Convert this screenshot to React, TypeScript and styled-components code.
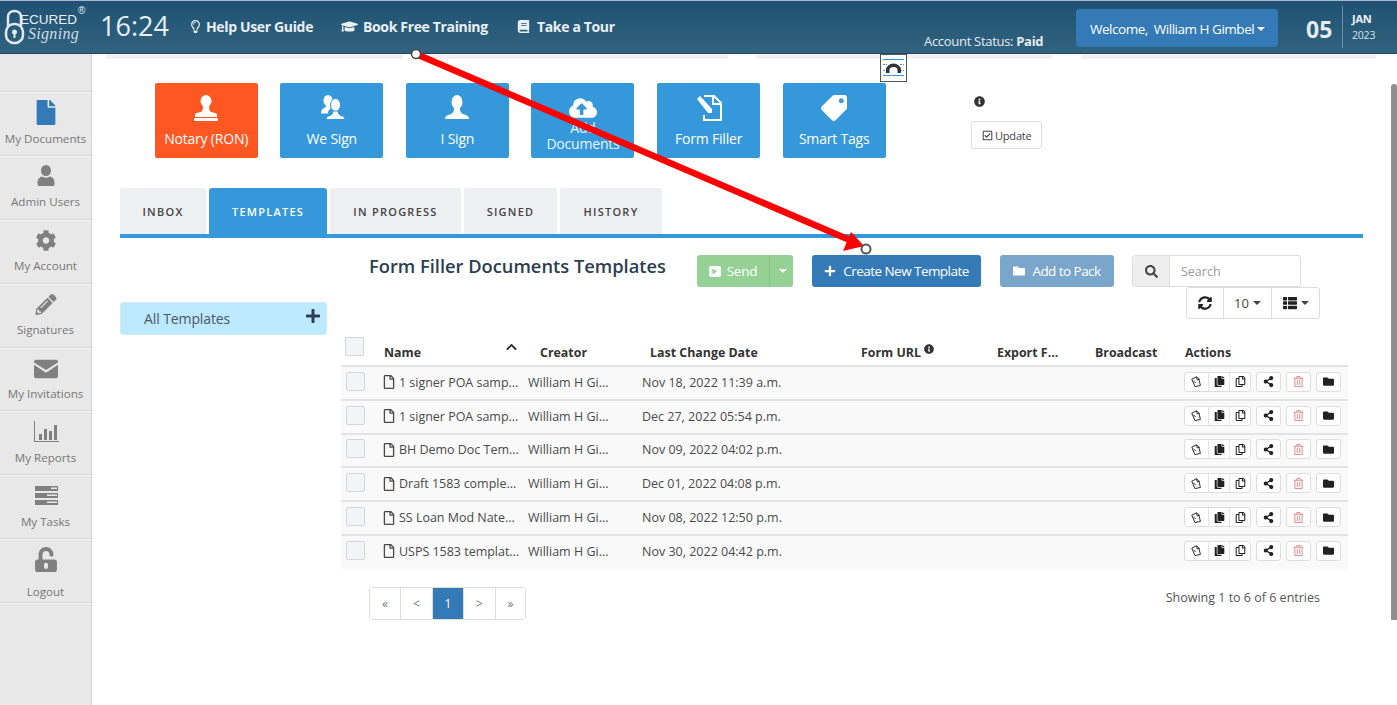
import React from "react";
import styled, { createGlobalStyle } from "styled-components";
import {
  FaBook,
  FaChevronUp,
  FaCog,
  FaCopy,
  FaFile,
  FaFolder,
  FaGraduationCap,
  FaInfoCircle,
  FaPencilAlt,
  FaPlay,
  FaPlus,
  FaRegCheckSquare,
  FaRegCopy,
  FaRegFile,
  FaRegLightbulb,
  FaRegTrashAlt,
  FaSearch,
  FaShareAlt,
  FaSyncAlt,
  FaTag,
  FaThList,
  FaUnlockAlt,
  FaCloudUploadAlt,
} from "react-icons/fa";

const GlobalStyle = createGlobalStyle`
  html, body {
    margin: 0;
    padding: 0;
    overflow: hidden;
    background: #fff;
  }
  * { box-sizing: border-box; }
`;

const Page = styled.div`
  position: relative;
  width: 1397px;
  height: 705px;
  overflow: hidden;
  font-family: "Open Sans", "Liberation Sans", sans-serif;
  color: #333;
  display: flex;
  flex-direction: column;
`;

const Header = styled.header`
  height: 54px;
  flex: none;
  display: flex;
  align-items: stretch;
  padding-right: 4px;
  border-top: 1px solid #a9b9c4;
  border-bottom: 1px solid #24495f;
  background: linear-gradient(180deg, #1f5273 0%, #31627f 100%);
  color: #fff;
`;

const LogoBox = styled.div`
  position: relative;
  width: 88px;
  flex: none;

  svg {
    position: absolute;
    left: 3px;
    top: 8px;
  }
`;

const LogoWord = styled.span`
  position: absolute;
  left: 20px;
  top: 14px;
  font: 400 13.5px/10px "Liberation Sans", sans-serif;
  color: #e6eef3;
`;

const LogoScript = styled.span`
  position: absolute;
  left: 28px;
  top: 25px;
  font: italic 400 16px/16px "Liberation Serif", serif;
  letter-spacing: 0.3px;
  color: #cfdce4;
`;

const LogoMark = styled.span`
  position: absolute;
  left: 78px;
  top: 6px;
  font: 400 10px/8px "Liberation Sans", sans-serif;
  color: #e6eef3;
`;

const Clock = styled.div`
  width: 101px;
  padding: 7px 0 0 12px;
  font-size: 27px;
  line-height: 36px;
  color: #e8eef2;
  flex: none;
`;

const NavLink = styled.a<{ $width: number }>`
  width: ${(p) => p.$width}px;
  flex: none;
  padding-top: 16px;
  display: flex;
  gap: 4px;
  font-size: 14px;
  line-height: 19px;
  font-weight: 700;
  letter-spacing: -0.35px;
  color: #e9eff3;

  svg {
    margin-top: 3px;
    font-size: 13px;
  }
`;

const HatIcon = styled(FaGraduationCap)`
  && {
    font-size: 17px;
    margin: 1px 1px 0 0;
  }
`;

const BookIcon = styled(FaBook)`
  margin-right: 3px;
`;

const Status = styled.div`
  margin-left: auto;
  padding-top: 31px;
  width: 152px;
  font-size: 13px;
  line-height: 18px;
  letter-spacing: -0.3px;
  color: #e4ebef;

  b {
    font-weight: 700;
  }
`;

const WelcomeButton = styled.div`
  margin: 8px 0 0 0;
  width: 202px;
  height: 38px;
  padding: 1px 0 0 14px;
  border-radius: 4px;
  background: #337ab7;
  display: flex;
  align-items: center;
  font-size: 13.5px;
  letter-spacing: -0.48px;
  white-space: pre;
`;

const Caret = styled.span`
  display: inline-block;
  width: 0;
  height: 0;
  margin-left: 3px;
  border-top: 4px solid currentColor;
  border-left: 4px solid transparent;
  border-right: 4px solid transparent;
`;

const DateBox = styled.div`
  width: 115px;
  flex: none;
  padding: 10px 0 0 28px;
  display: flex;
`;

const DateDay = styled.div`
  width: 36px;
  font-size: 23px;
  line-height: 36px;
  font-weight: 700;
  color: #e4ebef;
`;

const DateRest = styled.div`
  height: 42px;
  margin-top: -5px;
  padding: 5px 0 0 9px;
  border-left: 1px solid #6f8ea3;
  font-size: 10.5px;
  line-height: 16px;
  letter-spacing: -0.2px;
  color: #d8e2e8;

  b {
    display: block;
    font-size: 11px;
    font-weight: 700;
    color: #eef3f6;
  }
`;

const Body = styled.div`
  flex: 1;
  display: flex;
  min-height: 0;
`;

const Sidebar = styled.nav`
  width: 92px;
  flex: none;
  padding-top: 37px;
  background: #e8e8e8;
  border-right: 1px solid #d6d6d6;
`;

const SideItem = styled.a<{ $active?: boolean; $tall?: boolean; $pad?: number }>`
  height: 63.9px;
  display: flex;
  flex-direction: column;
  align-items: center;
  justify-content: flex-start;
  padding-top: 8px;
  gap: ${(p) => (p.$tall ? "12px" : "5.500px")};
  border-top: 1px solid #d7d7d7;
  box-shadow: inset 0 1px 0 #f4f4f4;
  font-size: 11.6px;
  line-height: 16px;
  color: #777;

  svg {
    height: 25px;
    width: 26px;
    padding: ${(p) => p.$pad ?? 0}px;
    color: ${(p) => (p.$active ? "#337ab7" : "#808080")};
  }
`;

const SideEnd = styled.div`
  border-top: 1px solid #d7d7d7;
  box-shadow: inset 0 1px 0 #f4f4f4;
  height: 2px;
`;

const Main = styled.main`
  flex: 1;
  min-width: 0;
  padding: 0 34px 0 28px;
`;

const TopStrips = styled.div`
  margin-left: -14px;
  margin-right: -13px;
  height: 5px;
  display: grid;
  grid-template-columns: 315px 335px 325px 295px;
`;

const Strip = styled.div<{ $end?: number }>`
  background: #f1f1f4;
  margin-right: ${(p) => p.$end ?? 0}px;
`;

const TileRow = styled.div`
  display: flex;
  gap: 22.6px;
  margin: 24px 0 0 34.7px;
  height: 76px;
`;

const Tile = styled.a<{ $orange?: boolean }>`
  width: 103px;
  height: 75px;
  border-radius: 2px;
  background: ${(p) => (p.$orange ? "#ff5722" : "#3498db")};
  color: #fff;
  font-size: 14px;
  line-height: 16px;
  letter-spacing: -0.2px;
  text-align: center;
  display: flex;
  flex-direction: column;
  align-items: center;
  padding-top: 11px;

  svg {
    width: 28px;
    height: 28px;
    flex: none;
    margin-bottom: 9px;
  }
`;

const TileWrap = styled.span`
  display: block;
  margin-top: -11px;
  font-size: 14px;
  line-height: 16px;
  color: #eaf4fb;
`;

const FlippedTag = styled(FaTag)`
  transform: scaleX(-1);
  padding: 1px;
`;

const UpdateBox = styled.div`
  margin-left: 63px;
  padding-top: 13px;
  font-size: 11px;
  color: #333;

  > svg {
    display: block;
    margin: 0 0 14px 3px;
    width: 11px;
    height: 11px;
  }
`;

const UpdateButton = styled.button`
  width: 71px;
  height: 28px;
  padding: 0;
  border: 1px solid #ddd;
  border-radius: 3px;
  background: #fff;
  color: #444;
  font: 400 11px "Open Sans", sans-serif;
  letter-spacing: -0.2px;
  display: flex;
  align-items: center;
  justify-content: center;
  gap: 2px;
`;

const Tabs = styled.div`
  display: flex;
  gap: 3px;
  margin-top: 29px;
  height: 46px;
`;

const Tab = styled.div<{ $active?: boolean; $width: number }>`
  width: ${(p) => p.$width}px;
  border-radius: 3px 3px 0 0;
  background: ${(p) => (p.$active ? "#3498db" : "#eeeff1")};
  color: ${(p) => (p.$active ? "#fff" : "#444")};
  font-size: 11px;
  font-weight: 600;
  letter-spacing: 1.25px;
  display: flex;
  align-items: center;
  justify-content: center;
`;

const TabLine = styled.div`
  height: 4px;
  background: #3498db;
`;

const Content = styled.div`
  display: flex;
  align-items: flex-start;
`;

const LeftPane = styled.div`
  width: 221px;
  flex: none;
  padding-top: 64px;
`;

const AllTemplates = styled.div`
  width: 207px;
  height: 33px;
  border-radius: 3px;
  background: #bde9ff;
  border: 1px solid #cfeaf8;
  padding: 0 5px 0 23px;
  display: flex;
  align-items: center;
  justify-content: space-between;
  font-size: 14px;
  color: #4a5663;
  letter-spacing: -0.1px;

  svg {
    width: 16px;
    height: 16px;
    margin-top: -6px;
    color: #2c3e50;
  }
`;

const RightPane = styled.div`
  flex: 1;
  min-width: 0;
  padding-top: 17px;
`;

const Toolbar = styled.div`
  display: flex;
  align-items: flex-start;
  padding-left: 28px;
  height: 32px;
`;

const Title = styled.h2`
  margin: 0;
  width: 328px;
  font-size: 18.3px;
  line-height: 22px;
  font-weight: 600;
  color: #2c3e50;
`;

const Button = styled.button<{ $bg: string; $width: number; $gap?: number }>`
  width: ${(p) => p.$width}px;
  height: 32px;
  margin-right: ${(p) => p.$gap ?? 0}px;
  border: 0;
  border-radius: 3px;
  padding: 0;
  background: ${(p) => p.$bg};
  color: #fff;
  font: 400 13.5px "Open Sans", sans-serif;
  letter-spacing: -0.55px;
  display: flex;
  align-items: center;
  justify-content: center;
  gap: 7px;

  svg {
    width: 12px;
    height: 12px;
  }
`;

const SplitButton = styled.div`
  width: 96px;
  height: 32px;
  margin-right: 19px;
  display: flex;
  border-radius: 3px;
  overflow: hidden;
  background: #95d195;
  color: #fff;
  font-size: 13.5px;
`;

const SplitMain = styled.div`
  width: 73px;
  border-right: 1px solid #84c284;
  display: flex;
  align-items: center;
  justify-content: center;
  gap: 6px;
  letter-spacing: -0.2px;
`;

const SplitCaret = styled.div`
  flex: 1;
  display: flex;
  align-items: center;
  justify-content: center;
`;

const PlayBox = styled.span`
  width: 12px;
  height: 11px;
  border-radius: 2px;
  background: #fff;
  color: #95d195;
  display: flex;
  align-items: center;
  justify-content: center;

  svg {
    width: 5px;
    height: 5px;
  }
`;

const Search = styled.div`
  width: 169px;
  height: 32px;
  display: flex;
  border: 1px solid #ddd;
  border-radius: 3px;
  overflow: hidden;
  font-size: 12.5px;
  color: #999;
`;

const SearchAddon = styled.div`
  width: 37px;
  background: #eee;
  border-right: 1px solid #ddd;
  color: #444;
  display: flex;
  align-items: center;
  justify-content: center;

  svg {
    width: 13px;
    height: 13px;
  }
`;

const SearchField = styled.div`
  flex: 1;
  display: flex;
  align-items: center;
  padding-left: 11px;
`;

const TableTools = styled.div`
  display: flex;
  justify-content: flex-end;
  margin-right: 43px;
  height: 32px;
`;

const ToolGroup = styled.div`
  display: flex;
  height: 32px;
  border: 1px solid #ddd;
  border-radius: 3px;
  font-size: 13px;
  color: #444;
`;

const ToolCell = styled.div<{ $width: number }>`
  width: ${(p) => p.$width}px;
  display: flex;
  align-items: center;
  justify-content: center;
  gap: 1px;
  border-left: 1px solid #ddd;

  &:first-child {
    border-left: 0;
  }

  svg {
    width: 14px;
    height: 14px;
    color: #222;
  }
`;

const Table = styled.div`
  margin: 18px 15px 0 0;
`;

const columns = "37px 150px 112px 210px 136px 100px 98px 1fr";

const HeadRow = styled.div`
  height: 30px;
  display: grid;
  grid-template-columns: ${columns};
  align-items: end;
  padding-bottom: 5px;
  border-bottom: 2px solid #e3e3e3;
  font-size: 12.4px;
  line-height: 17px;
  font-weight: 700;
  color: #333;
`;

const HeadCell = styled.div<{ $indent?: number }>`
  padding-left: ${(p) => p.$indent ?? 0}px;
  display: flex;
  align-items: flex-start;
  white-space: nowrap;
  position: relative;

  svg {
    width: 10px;
    height: 10px;
    margin: 0 0 0 3px;
  }
`;

const SortIcon = styled.span`
  position: absolute;
  left: 127px;
  top: -3px;
  font-size: 13px;
  line-height: 13px;

  svg {
    width: 13px;
    height: 12px;
    margin: 0;
  }
`;

const Row = styled.div`
  height: 33.8px;
  display: grid;
  grid-template-columns: ${columns};
  align-items: center;
  background: #f9f9f9;
  border-bottom: 2px solid #e3e3e3;
  font-size: 12.5px;
  color: #4a4a4a;
  white-space: nowrap;

  &:last-child {
    border-bottom: 0;
    padding-bottom: 2px;
  }
`;

const Check = styled.span<{ $head?: boolean }>`
  display: block;
  width: 19px;
  height: 19px;
  margin: ${(p) => (p.$head ? "0 0 5px 4px" : "-3px 0 0 5px")};
  border: 1px solid #d4d6da;
  border-radius: 2px;
  background: #f2f4f7;
`;

const NameCell = styled.div`
  display: flex;
  align-items: center;
  padding-left: 5px;
  gap: 4px;
  margin-top: -1px;
  letter-spacing: -0.02px;

  svg {
    width: 12px;
    height: 14px;
    flex: none;
  }
`;

const CreatorCell = styled.div`
  margin-top: -1px;
`;

const DateCell = styled.div`
  padding-left: 2px;
  margin-top: -1px;
`;

const Actions = styled.div`
  display: flex;
  gap: 5px;
  margin-top: -2px;
`;

const ActionGroup = styled.div`
  display: flex;
  height: 20px;
  border: 1px solid #ddd;
  border-radius: 3px;
  background: #fff;
`;

const ActionCell = styled.span<{ $width: number; $danger?: boolean }>`
  width: ${(p) => p.$width}px;
  display: flex;
  align-items: center;
  justify-content: center;
  border-left: 1px solid #e4e4e4;
  color: ${(p) => (p.$danger ? "#e58f8f" : "#222")};

  &:first-child {
    border-left: 0;
  }

  svg {
    width: 11px;
    height: 11px;
  }
`;

const Footer = styled.div`
  margin: 17px 43px 0 28px;
  display: flex;
  justify-content: space-between;
  align-items: flex-start;
`;

const Pager = styled.div`
  display: flex;
  height: 33px;
  border: 1px solid #ddd;
  border-radius: 3px;
  font-size: 12px;
  color: #777;
`;

const PageCell = styled.div<{ $active?: boolean; $width: number }>`
  width: ${(p) => p.$width}px;
  display: flex;
  align-items: center;
  justify-content: center;
  border-left: 1px solid #ddd;
  background: ${(p) => (p.$active ? "#337ab7" : "#fff")};
  color: ${(p) => (p.$active ? "#fff" : "#777")};

  &:first-child {
    border-left: 0;
  }
`;

const Showing = styled.div`
  padding-top: 2px;
  font-size: 12.5px;
  line-height: 18px;
  color: #555;
`;

const Scrollbar = styled.div`
  position: absolute;
  right: 0;
  top: 84px;
  width: 6px;
  height: 536px;
  border-radius: 3px 3px 0 0;
  background: #8e8e8e;
`;

const Overlay = styled.svg`
  position: absolute;
  left: 0;
  top: 0;
  pointer-events: none;
`;

const FloatIcon = styled.div`
  position: absolute;
  left: 880px;
  top: 54px;
  width: 27px;
  height: 28px;
  border: 1px solid #555;
  background: #fff;
`;

const ROWS = [
  ["1 signer POA samp...", "Nov 18, 2022 11:39 a.m."],
  ["1 signer POA samp...", "Dec 27, 2022 05:54 p.m."],
  ["BH Demo Doc Tem...", "Nov 09, 2022 04:02 p.m."],
  ["Draft 1583 comple...", "Dec 01, 2022 04:08 p.m."],
  ["SS Loan Mod Nate...", "Nov 08, 2022 12:50 p.m."],
  ["USPS 1583 templat...", "Nov 30, 2022 04:42 p.m."],
];

const NotaryIcon = () => (
  <svg viewBox="0 0 28 28" fill="currentColor">
    <ellipse cx="14" cy="7" rx="5.500" ry="6" />
    <path d="M11 12h6c0 3 .5 5 2 6 3 .5 6 1 6 3v2H3v-2c0-2 3-2.500 6-3 1.500-1 2-3 2-6z" />
    <rect x="2" y="24" width="24" height="3" rx="1" />
  </svg>
);

const BustIcon = () => (
  <svg viewBox="0 0 28 28" fill="currentColor">
    <ellipse cx="14" cy="8" rx="5.500" ry="7" />
    <path d="M11 14h6c0 3 .5 5 3 6 3 1 6 2 6 5H2c0-3 3-4 6-5 2.500-1 3-3 3-6z" />
  </svg>
);

const CoupleIcon = () => (
  <svg viewBox="0 0 28 28" fill="currentColor">
    <ellipse cx="10" cy="6.500" rx="4.500" ry="5.500" />
    <path d="M8 11h4c0 2 .5 3 1 3.500-2 1-3 2.500-3 5H3c0-3 1-4.500 3-5.500 1.500-.5 2-1.500 2-3z" />
    <ellipse cx="17.500" cy="11" rx="5" ry="6.500" stroke="#3498db" strokeWidth="1" />
    <path d="M15 17h5c0 2 .5 3.500 3 4.500 2 .8 4 1.500 4 4H8c0-2.500 2-3.200 4-4 2.500-1 3-2.500 3-4.500z" stroke="#3498db" strokeWidth="1" />
  </svg>
);

const FormIcon = () => (
  <svg viewBox="0 0 28 28" fill="none" stroke="currentColor" strokeWidth="2">
    <path d="M9 2h10l7 7v17H9v-5" />
    <path d="M18 2v8h8" />
    <path d="M2 5l3-3 12 13v4h-4z" fill="currentColor" stroke="none" />
  </svg>
);

const UserIcon = () => (
  <svg viewBox="0 0 26 25" fill="currentColor">
    <ellipse cx="13" cy="6.500" rx="5" ry="5.500" />
    <path d="M8.500 12.500c2.500 1.500 6.500 1.500 9 0 2.500 1 4 3 4 6v1.500c0 1.500-1 2-2 2h-13c-1 0-2-.5-2-2v-1.500c0-3 1.500-5 4-6z" />
  </svg>
);

const TasksIcon = () => (
  <svg viewBox="0 0 26 25" fill="currentColor">
    <path d="M2 3h23v5H2zM2 10h23v5H2zM2 17h23v5H2z" />
    <path d="M18 4.500h6V6h-6zM14 11.500h10V13H14zM14 18.500h10V20H14z" fill="#e8e8e8" />
  </svg>
);

const ReportsIcon = () => (
  <svg viewBox="0 0 26 25" fill="currentColor">
    <path d="M1 2h1v20h24v1H1z" />
    <path d="M6 15h3v6H6zM11 10h3v11h-3zM16 12h3v9h-3zM21 6h3v15h-3z" />
  </svg>
);

const MailIcon = () => (
  <svg viewBox="0 0 26 25" fill="currentColor">
    <path d="M2 3h22c1 0 2 1 2 2v1L13 14 0 6V5c0-1 1-2 2-2z" />
    <path d="M0 8.500 13 17 26 8.500V21c0 1-1 2-2 2H2c-1 0-2-1-2-2z" />
  </svg>
);

const TiltDocIcon = () => (
  <svg viewBox="0 0 14 14" fill="none" stroke="currentColor" strokeWidth="1.200">
    <path d="M1 4l6-3 3 3 2 8-7 1.500z" />
    <path d="M7 1l1 4 3-1" />
    <path d="M3 6l3 3" />
  </svg>
);

const App = () => (
  <Page>
    <GlobalStyle />
    <Header>
      <LogoBox>
        <svg width="24" height="38" viewBox="0 0 24 38" fill="none">
          <path d="M5 17V8c0-4 3-6 6.500-6S18 4 18 8v9" stroke="#dfe9ef" strokeWidth="2.500" />
          <rect x="3" y="15" width="17" height="19" rx="8" stroke="#dfe9ef" strokeWidth="2.500" />
          <circle cx="11.500" cy="23" r="2.500" fill="#dfe9ef" />
          <rect x="10.500" y="24" width="2" height="5" fill="#dfe9ef" />
        </svg>
        <LogoWord>ECURED</LogoWord>
        <LogoScript>Signing</LogoScript>
        <LogoMark>®</LogoMark>
      </LogoBox>
      <Clock>16:24</Clock>
      <NavLink $width={152}>
        <FaRegLightbulb />
        Help User Guide
      </NavLink>
      <NavLink $width={176}>
        <HatIcon />
        Book Free Training
      </NavLink>
      <NavLink $width={110}>
        <BookIcon />
        Take a Tour
      </NavLink>
      <Status>
        Account Status: <b>Paid</b>
      </Status>
      <WelcomeButton>
        Welcome,  William H Gimbel
        <Caret />
      </WelcomeButton>
      <DateBox>
        <DateDay>05</DateDay>
        <DateRest>
          <b>JAN</b>
          2023
        </DateRest>
      </DateBox>
    </Header>
    <Body>
      <Sidebar>
        <SideItem $active>
          <FaFile />
          My Documents
        </SideItem>
        <SideItem>
          <UserIcon />
          Admin Users
        </SideItem>
        <SideItem $pad={2}>
          <FaCog />
          My Account
        </SideItem>
        <SideItem $pad={2}>
          <FaPencilAlt />
          Signatures
        </SideItem>
        <SideItem $pad={1}>
          <MailIcon />
          My Invitations
        </SideItem>
        <SideItem>
          <ReportsIcon />
          My Reports
        </SideItem>
        <SideItem>
          <TasksIcon />
          My Tasks
        </SideItem>
        <SideItem $tall>
          <FaUnlockAlt />
          Logout
        </SideItem>
        <SideEnd />
      </Sidebar>
      <Main>
        <TopStrips>
          <Strip $end={18} />
          <Strip $end={28} />
          <Strip $end={29} />
          <Strip />
        </TopStrips>
        <TileRow>
          <Tile $orange>
            <NotaryIcon />
            Notary (RON)
          </Tile>
          <Tile>
            <CoupleIcon />
            We Sign
          </Tile>
          <Tile>
            <BustIcon />
            I Sign
          </Tile>
          <Tile>
            <FaCloudUploadAlt />
            <TileWrap>
              Add
              <br />
              Documents
            </TileWrap>
          </Tile>
          <Tile>
            <FormIcon />
            Form Filler
          </Tile>
          <Tile>
            <FlippedTag />
            Smart Tags
          </Tile>
          <UpdateBox>
            <FaInfoCircle />
            <UpdateButton>
              <FaRegCheckSquare />
              Update
            </UpdateButton>
          </UpdateBox>
        </TileRow>
        <Tabs>
          <Tab $width={86}>INBOX</Tab>
          <Tab $width={118} $active>
            TEMPLATES
          </Tab>
          <Tab $width={131}>IN PROGRESS</Tab>
          <Tab $width={93}>SIGNED</Tab>
          <Tab $width={102}>HISTORY</Tab>
        </Tabs>
        <TabLine />
        <Content>
          <LeftPane>
            <AllTemplates>
              All Templates
              <FaPlus />
            </AllTemplates>
          </LeftPane>
          <RightPane>
            <Toolbar>
              <Title>Form Filler Documents Templates</Title>
              <SplitButton>
                <SplitMain>
                  <PlayBox>
                    <FaPlay />
                  </PlayBox>
                  Send
                </SplitMain>
                <SplitCaret>
                  <Caret />
                </SplitCaret>
              </SplitButton>
              <Button $bg="#337ab7" $width={169} $gap={19}>
                <FaPlus />
                Create New Template
              </Button>
              <Button $bg="#7ba6cc" $width={114} $gap={18}>
                <FaFolder />
                Add to Pack
              </Button>
              <Search>
                <SearchAddon>
                  <FaSearch />
                </SearchAddon>
                <SearchField>Search</SearchField>
              </Search>
            </Toolbar>
            <TableTools>
              <ToolGroup>
                <ToolCell $width={36}>
                  <FaSyncAlt />
                </ToolCell>
                <ToolCell $width={48}>
                  10
                  <Caret />
                </ToolCell>
                <ToolCell $width={48}>
                  <FaThList />
                  <Caret />
                </ToolCell>
              </ToolGroup>
            </TableTools>
            <Table>
              <HeadRow>
                <HeadCell>
                  <Check $head />
                </HeadCell>
                <HeadCell $indent={6}>
                  Name
                  <SortIcon>
                    <FaChevronUp />
                  </SortIcon>
                </HeadCell>
                <HeadCell $indent={12}>Creator</HeadCell>
                <HeadCell $indent={10}>Last Change Date</HeadCell>
                <HeadCell $indent={11}>
                  Form URL
                  <FaInfoCircle />
                </HeadCell>
                <HeadCell $indent={11}>Export F...</HeadCell>
                <HeadCell $indent={9}>Broadcast</HeadCell>
                <HeadCell $indent={1}>Actions</HeadCell>
              </HeadRow>
              {ROWS.map(([name, date], i) => (
                <Row key={i}>
                  <div>
                    <Check />
                  </div>
                  <NameCell>
                    <FaRegFile />
                    {name}
                  </NameCell>
                  <CreatorCell>William H Gi...</CreatorCell>
                  <DateCell>{date}</DateCell>
                  <div />
                  <div />
                  <div />
                  <Actions>
                    <ActionGroup>
                      <ActionCell $width={23}>
                        <TiltDocIcon />
                      </ActionCell>
                      <ActionCell $width={21}>
                        <FaCopy />
                      </ActionCell>
                      <ActionCell $width={21}>
                        <FaRegCopy />
                      </ActionCell>
                    </ActionGroup>
                    <ActionGroup>
                      <ActionCell $width={23}>
                        <FaShareAlt />
                      </ActionCell>
                    </ActionGroup>
                    <ActionGroup>
                      <ActionCell $width={23} $danger>
                        <FaRegTrashAlt />
                      </ActionCell>
                    </ActionGroup>
                    <ActionGroup>
                      <ActionCell $width={23}>
                        <FaFolder />
                      </ActionCell>
                    </ActionGroup>
                  </Actions>
                </Row>
              ))}
            </Table>
            <Footer>
              <Pager>
                <PageCell $width={30}>«</PageCell>
                <PageCell $width={32}>&lt;</PageCell>
                <PageCell $width={31} $active>
                  1
                </PageCell>
                <PageCell $width={32}>&gt;</PageCell>
                <PageCell $width={30}>»</PageCell>
              </Pager>
              <Showing>Showing 1 to 6 of 6 entries</Showing>
            </Footer>
          </RightPane>
        </Content>
      </Main>
    </Body>
    <Scrollbar />
    <FloatIcon>
      <svg width="25" height="26" viewBox="0 0 25 26">
        <path d="M2 4.500h21M2 20.500h21" stroke="#3498db" strokeWidth="1" />
        <path d="M2 9.500h4M19 9.500h4M2 15.500h4M19 15.500h4" stroke="#3498db" strokeWidth="1" strokeDasharray="2 1" />
        <path d="M5 18v-3a7.500 6.500 0 0 1 15 0v3h-3.500v-3a4 3 0 0 0-8 0v3z" fill="#333" />
      </svg>
    </FloatIcon>
    <Overlay width="1397" height="705" viewBox="0 0 1397 705">
      <line x1="416" y1="54" x2="852" y2="241" stroke="#ff0000" strokeWidth="6.500" />
      <polygon points="864,246 843,251 851,232" fill="#ff0000" />
      <circle cx="416" cy="54" r="4.500" fill="#fff" stroke="#444" strokeWidth="1.500" />
      <circle cx="866" cy="249" r="4.500" fill="#fff" stroke="#555" strokeWidth="2" />
    </Overlay>
  </Page>
);

export default App;
